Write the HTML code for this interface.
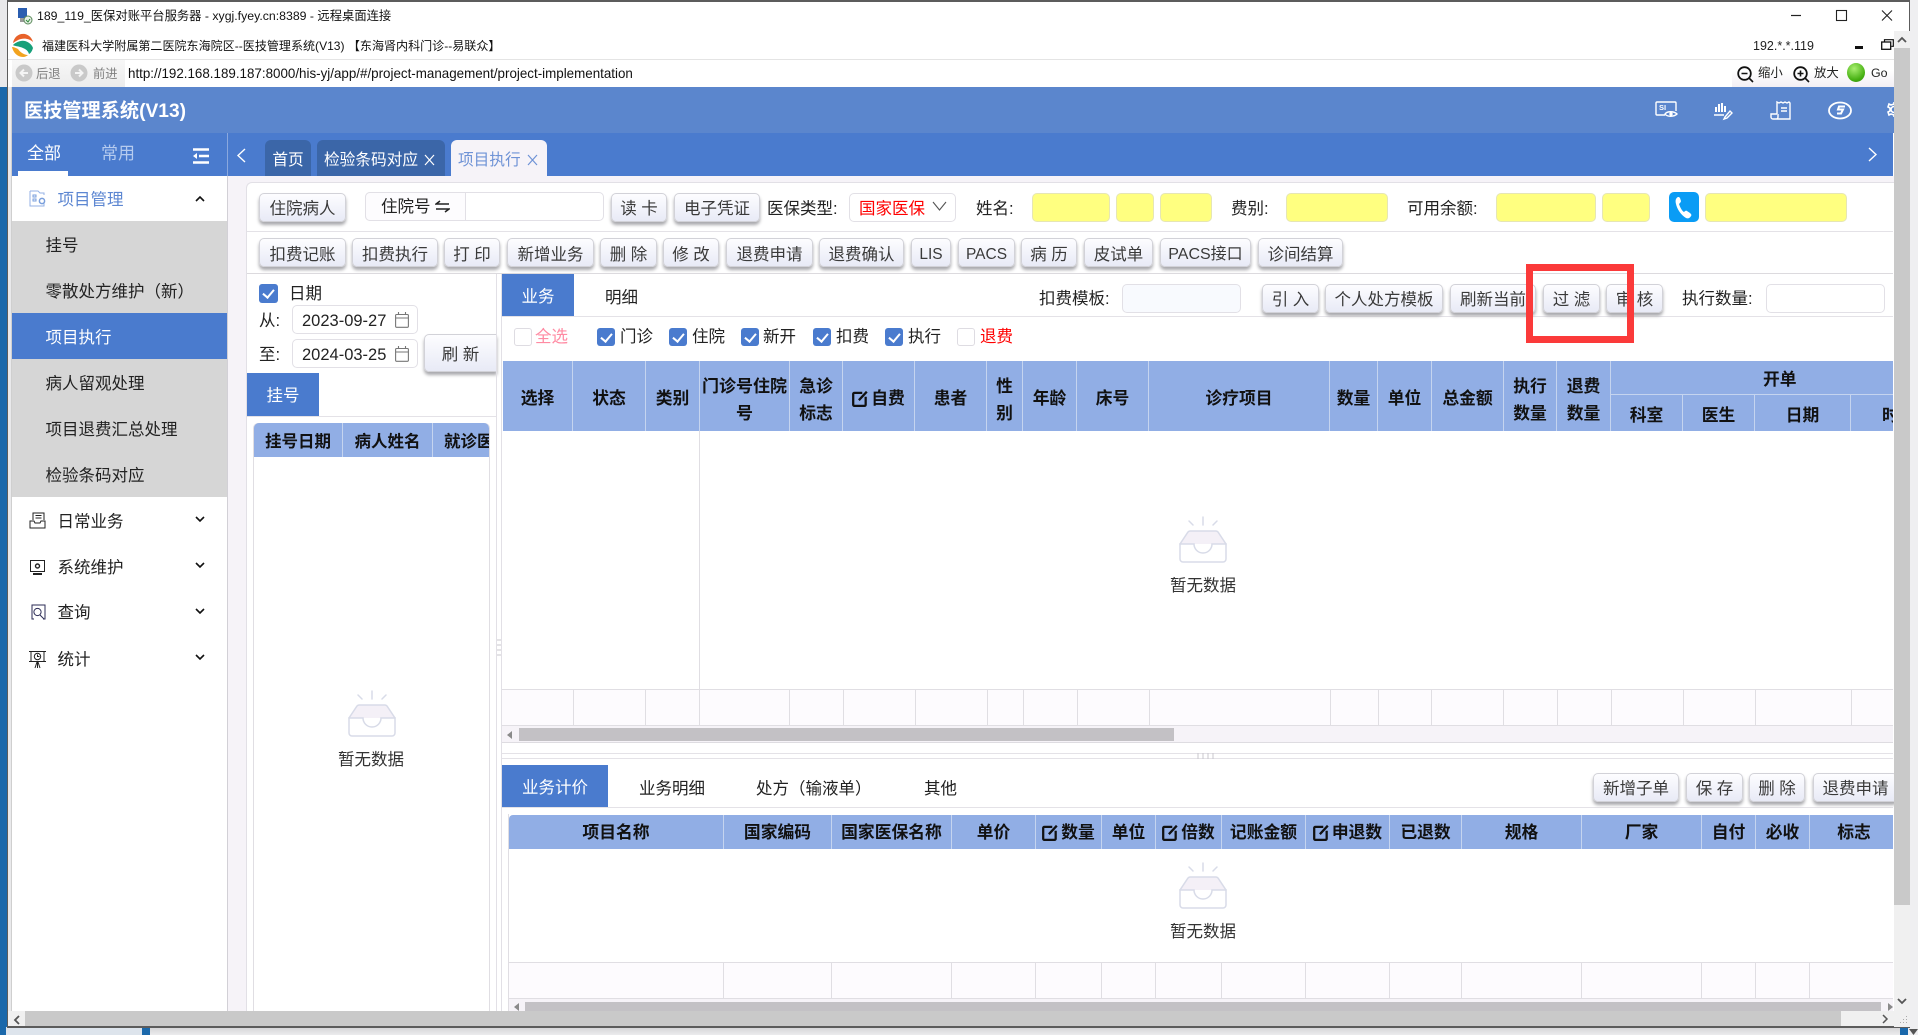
<!DOCTYPE html>
<html lang="zh">
<head>
<meta charset="utf-8">
<title>医技管理系统</title>
<style>
html,body{margin:0;padding:0;width:1918px;height:1035px;overflow:hidden;background:#efeff1;}
body{position:relative;font-family:"Liberation Sans","Noto Sans CJK SC",sans-serif;font-size:16.5px;color:#222;}
div,span,svg{box-sizing:border-box;}
.a{position:absolute;white-space:pre;}
.t{position:absolute;white-space:pre;line-height:24px;height:24px;margin-top:1px;}
.btn{position:absolute;height:29px;border:1px solid #d2d2d8;border-radius:5px;background:linear-gradient(#fdfdff,#e8eaf6);box-shadow:0 3px 3px #a9a9ad;text-align:center;line-height:30px;color:#3a3a3a;white-space:pre;overflow:hidden;}
.r2{top:238px;line-height:32px;}
.y{position:absolute;top:193px;height:29px;background:#ffff80;border:1px solid #e6e6b4;border-radius:5px;}
.in{position:absolute;background:#fff;border:1px solid #e2e0e6;border-radius:5px;}
.cb{position:absolute;top:328px;width:18px;height:18px;border-radius:3px;background:#4a7bce;}
.cb:after{content:"";position:absolute;left:6px;top:3px;width:5px;height:9px;border:solid #fff;border-width:0 2px 2px 0;transform:rotate(40deg);}
.cb.n{background:#fff;border:1px solid #dedce2;}
.cb.n:after{display:none;}
.th{position:absolute;background:#91aee5;}
.c{position:absolute;top:0;bottom:0;border-right:1px solid #c5d4ef;display:flex;align-items:center;justify-content:center;text-align:center;font-weight:bold;color:#111;line-height:27px;overflow:hidden;padding-top:5px;font-size:16.8px;white-space:nowrap;}
.w{white-space:normal;padding:9px 9px 0;}
.p4 .c{padding-top:4px;font-size:16.5px;}
.p2 .c{padding-top:1px;}
.f{position:absolute;background:#fdfbfe;border-top:1px solid #e0dee3;border-bottom:1px solid #e0dee3;}
.f i{position:absolute;top:0;bottom:0;width:1px;background:#e0dee3;}
.mi{position:absolute;left:57.5px;height:24px;line-height:24px;white-space:pre;margin-top:1px;}
.si{position:absolute;left:45.5px;height:24px;line-height:24px;white-space:pre;color:#222;margin-top:1px;}
.tab{position:absolute;top:140px;height:36px;border-radius:6px 6px 0 0;line-height:41px;text-align:center;color:#fff;background:#3b66a8;white-space:pre;font-size:15.7px;overflow:hidden;}
.chev{position:absolute;left:195px;width:10px;height:10px;}
svg.ic{position:absolute;overflow:visible;}
.pane{position:absolute;background:#fff;}
.ln{position:absolute;background:#e4e2e7;}
</style>
</head>
<body>
<!-- desktop behind -->
<div class="a" style="left:0;top:87px;width:7px;height:948px;background:#1a68ab"></div>
<div class="a" style="left:0;top:0;width:7px;height:87px;background:#e9e9eb"></div>
<div class="a" style="left:6px;top:1027px;width:136px;height:8px;background:#dde4ec"></div>
<div class="a" style="left:142px;top:1027px;width:8px;height:8px;background:#1a68ab"></div>
<div class="a" style="left:150px;top:1027px;width:1750px;height:8px;background:linear-gradient(#d4d4d6,#ececee)"></div>
<div class="a" style="left:1900px;top:1027px;width:8px;height:8px;background:#1a68ab"></div>

<!-- window -->
<div class="a" style="left:7px;top:0;width:1903px;height:1028px;background:#fff;border:1px solid #5c5c5c;border-top-width:2px;border-bottom-width:2px"></div>
<div class="a" style="left:8px;top:87px;width:4px;height:925px;background:#e9e9eb;border-right:1px solid #cfcfcf"></div>

<!-- title bar -->
<svg class="ic" style="left:17px;top:8px" width="17" height="17" viewBox="0 0 17 17"><rect x="1" y="0" width="9" height="10" fill="#2a5db0"/><rect x="3" y="10" width="8" height="4" fill="#9a9a9a"/><circle cx="11" cy="12" r="4" fill="#e6efe6" stroke="#5a8a5a"/><path d="M9 12l2 2 2-3" stroke="#2f8a3a" fill="none"/></svg>
<div class="t" style="left:37px;top:3px;font-size:12.3px;color:#111">189_119_医保对账平台服务器 - xygj.fyey.cn:8389 - 远程桌面连接</div>
<svg class="ic" style="left:1791px;top:10px" width="101" height="11" viewBox="0 0 101 11"><path d="M0 5.500H10" stroke="#222" stroke-width="1.200"/><rect x="45.500" y=".5" width="10" height="10" fill="none" stroke="#222" stroke-width="1.100"/><path d="M91 .5l10 10M101 .5l-10 10" stroke="#222" stroke-width="1.100"/></svg>

<!-- app row -->
<svg class="ic" style="left:10px;top:33px" width="24" height="25" viewBox="0 0 24 25">
<path d="M3 10C4 4 9 0 15 1c4 1 7 4 8 8-3-3-8-4-12-3-4 1-6 3-8 4Z" fill="#e8622a"/>
<path d="M3 12c3-3 8-5 12-4 4 1 7 4 8 7-1 3-2 5-4 6-1-4-5-6-9-7-3-1-6-1-7-2Z" fill="#17a07a"/>
<path d="M2 14c1 5 5 10 11 10 2 0 4-1 5-2-4 0-8-3-10-6-2-1-4-2-6-2Z" fill="#f2a31e"/>
</svg>
<div class="t" style="left:42px;top:33px;font-size:12.05px;color:#111">福建医科大学附属第二医院东海院区--医技管理系统(V13) 【东海肾内科门诊--易联众】</div>
<div class="t" style="left:1753px;top:33px;font-size:12.5px;color:#222">192.*.*.119</div>
<div class="a" style="left:1855px;top:46px;width:8px;height:3px;background:#111"></div>
<svg class="ic" style="left:1881px;top:39px" width="13" height="11" viewBox="0 0 13 11"><path d="M3.500 2.500V.7h8.800v6.600h-2" fill="none" stroke="#111" stroke-width="1.200"/><rect x=".7" y="3" width="9" height="7.300" fill="#fff" stroke="#111" stroke-width="1.300"/></svg>
<div class="a" style="left:8px;top:59px;width:1886px;height:1px;background:#e4e4e4"></div>

<!-- nav row -->
<div class="a" style="left:12px;top:60px;width:113px;height:27px;background:linear-gradient(#f7f7f7,#ececec)"></div>
<svg class="ic" style="left:15px;top:64px" width="18" height="18" viewBox="0 0 18 18"><circle cx="9" cy="9" r="8.500" fill="#c9c9c9"/><path d="M13 9H6M9 5.500L5.500 9 9 12.500" stroke="#f4f4f4" stroke-width="2" fill="none"/></svg>
<div class="t" style="left:36px;top:61px;font-size:12.3px;color:#7f7f7f">后退</div>
<svg class="ic" style="left:70px;top:64px" width="18" height="18" viewBox="0 0 18 18"><circle cx="9" cy="9" r="8.500" fill="#c9c9c9"/><path d="M5 9h7M9 5.500L12.500 9 9 12.500" stroke="#f4f4f4" stroke-width="2" fill="none"/></svg>
<div class="t" style="left:93px;top:61px;font-size:12.3px;color:#7f7f7f">前进</div>
<div class="t" style="left:128px;top:61px;font-size:13.38px;color:#111">http://192.168.189.187:8000/his-yj/app/#/project-management/project-implementation</div>
<div class="a" style="left:1732px;top:60px;width:162px;height:27px;background:linear-gradient(#fff 40%,#f2eff4)"></div>
<svg class="ic" style="left:1737px;top:66px" width="17" height="17" viewBox="0 0 17 17"><circle cx="7.500" cy="7.500" r="6.300" fill="none" stroke="#111" stroke-width="1.800"/><path d="M4.500 7.500h6M12 12l4 4" stroke="#111" stroke-width="1.600"/></svg>
<div class="t" style="left:1758px;top:60px;font-size:12.4px;color:#222">缩小</div>
<svg class="ic" style="left:1793px;top:66px" width="17" height="17" viewBox="0 0 17 17"><circle cx="7.500" cy="7.500" r="6.300" fill="none" stroke="#111" stroke-width="1.800"/><path d="M4.500 7.500h6M7.500 4.500v6M12 12l4 4" stroke="#111" stroke-width="1.600"/></svg>
<div class="t" style="left:1814px;top:60px;font-size:12.4px;color:#222">放大</div>
<div class="a" style="left:1847px;top:63px;width:18px;height:19px;border-radius:50%;background:radial-gradient(circle at 40% 30%,#a8ef70,#46b012 65%,#2c8208)"></div>
<div class="t" style="left:1871px;top:60px;font-size:12.4px;color:#222">Go</div>

<!-- blue header -->
<div class="a" style="left:12px;top:87px;width:1882px;height:46px;background:#5b86cd"></div>
<div class="t" style="left:24px;top:99px;font-size:19.2px;font-weight:bold;color:#fff">医技管理系统(V13)</div>
<svg class="ic" style="left:1655px;top:101px" width="240" height="18" viewBox="0 0 240 18" fill="none" stroke="#fff" stroke-width="1.400">
<path d="M10 14H2a1 1 0 0 1-1-1V2a1 1 0 0 1 1-1h18a1 1 0 0 1 1 1v8"/><circle cx="16" cy="13" r="1.700" fill="#fff" stroke="none"/><path d="M10 13c2-3 9-3 12 0-3 3-10 3-12 0Z"/>
<text x="4" y="9" font-size="7.500" font-weight="bold" fill="#fff" stroke="none" font-family="Liberation Sans">SI</text>
<path d="M61 11V6M64 11V3M67 11V2M70 11V5" stroke-width="2"/><path d="M59 14h10M70 16l5-6 2 2-5 5-3 1Z" stroke-width="1.400"/>
<path d="M122 13V1l2 1 2-1 2 1 2-1 2 1 2-1 1 1v16h-14M122 13h-6v3a2 2 0 0 0 2 2h3a2 2 0 0 0 2-2v-3M126 7h6M126 10h6"/>
<ellipse cx="185" cy="9.500" rx="11" ry="8" stroke-width="1.800"/><path d="M190 5.500h-6l-1 3h5l-2 4h-4" stroke-width="2"/>
<path d="M239 1v2l-3 1-2-1-1 3 2 1v3l-2 1 1 3 2-1 3 1v2" stroke-width="1.600"/><circle cx="239" cy="8.500" r="3" stroke-width="1.600"/>
</svg>

<!-- tab strip -->
<div class="a" style="left:12px;top:133px;width:1881px;height:43px;background:#4a7bce"></div>
<div class="a" style="left:227px;top:133px;width:1px;height:43px;background:#8aa8de"></div>
<div class="t" style="left:27px;top:141px;font-size:17px;color:#fff">全部</div>
<div class="t" style="left:101px;top:141px;font-size:17px;color:#b5cbef">常用</div>
<div class="a" style="left:18px;top:171px;width:50px;height:5px;background:#fff"></div>
<svg class="ic" style="left:193px;top:148px" width="16" height="16" viewBox="0 0 16 16"><path d="M0 1.500h16M6 8h10M0 14.500h16" stroke="#fff" stroke-width="2.400"/><path d="M0 8l4-3v6Z" fill="#fff"/></svg>
<svg class="ic" style="left:236px;top:148px" width="10" height="15" viewBox="0 0 10 15"><path d="M9 1L2 7.500 9 14" fill="none" stroke="#fff" stroke-width="1.400"/></svg>
<div class="tab" style="left:265px;width:46px">首页</div>
<div class="tab" style="left:317px;width:128px;text-align:left;padding-left:7px">检验条码对应<svg class="ic" style="left:107px;top:14px" width="11" height="12" viewBox="0 0 11 12"><path d="M1 1l9 10M10 1L1 11" stroke="#fff" stroke-width="1.200"/></svg></div>
<div class="tab" style="left:451px;width:96px;background:#f6f3f8;color:#6f93d6;text-align:left;padding-left:7px">项目执行<svg class="ic" style="left:76px;top:14px" width="11" height="12" viewBox="0 0 11 12"><path d="M1 1l9 10M10 1L1 11" stroke="#6f93d6" stroke-width="1.200"/></svg></div>
<svg class="ic" style="left:1868px;top:147px" width="10" height="15" viewBox="0 0 10 15"><path d="M1 1l7 6.500L1 14" fill="none" stroke="#fff" stroke-width="1.400"/></svg>

<!-- sidebar -->
<div class="a" style="left:12px;top:176px;width:215px;height:835px;background:#fff"></div>
<div class="a" style="left:227px;top:176px;width:1px;height:835px;background:#d2d0d6"></div>
<svg class="ic" style="left:29px;top:190px" width="17" height="17" viewBox="0 0 17 17" fill="none" stroke="#94b2e6" stroke-width="1"><path d="M1 1h8l2 2h4v2M15 13v3H1V1"/><path d="M4 5h3v2H4zM4 9h3v2H4z" stroke="#7a9fdc"/><circle cx="13" cy="11" r="2.600" stroke="#7a9fdc" stroke-width="1.500"/></svg>
<div class="mi" style="top:187px;color:#5d87d2">项目管理</div>
<svg class="chev" style="top:194px" viewBox="0 0 10 10"><path d="M1 7l4-4 4 4" fill="none" stroke="#111" stroke-width="1.600"/></svg>
<div class="a" style="left:12px;top:221px;width:215px;height:276px;background:#d6d6d6"></div>
<div class="a" style="left:12px;top:313px;width:215px;height:46px;background:#4a7bce"></div>
<div class="si" style="top:233px">挂号</div>
<div class="si" style="top:279px">零散处方维护（新）</div>
<div class="si" style="top:325px;color:#fff">项目执行</div>
<div class="si" style="top:371px">病人留观处理</div>
<div class="si" style="top:417px">项目退费汇总处理</div>
<div class="si" style="top:463px">检验条码对应</div>
<svg class="ic" style="left:29px;top:512px" width="17" height="17" viewBox="0 0 17 17" fill="none" stroke="#222" stroke-width="1"><path d="M4 8V1h11v7M6.500 3.500h6M6.500 6h6"/><path d="M1 9h4l1 2h5l1-2h4v7H1Z"/></svg>
<div class="mi" style="top:509px">日常业务</div>
<svg class="chev" style="top:514px" viewBox="0 0 10 10"><path d="M1 3l4 4 4-4" fill="none" stroke="#111" stroke-width="1.600"/></svg>
<svg class="ic" style="left:29px;top:559px" width="17" height="17" viewBox="0 0 17 17" fill="none" stroke="#222" stroke-width="1"><rect x="1.500" y="1.500" width="14" height="11"/><circle cx="8.500" cy="7" r="2" stroke-width="1.400"/><path d="M4 15h9" stroke-width="2"/></svg>
<div class="mi" style="top:555px">系统维护</div>
<svg class="chev" style="top:560px" viewBox="0 0 10 10"><path d="M1 3l4 4 4-4" fill="none" stroke="#111" stroke-width="1.600"/></svg>
<svg class="ic" style="left:30px;top:604px" width="16" height="16" viewBox="0 0 16 16" fill="none" stroke="#2b2b55" stroke-width="1"><path d="M4 15H2V1h13v14h-2"/><circle cx="7.500" cy="8" r="3.600"/><path d="M10 11l4 4"/></svg>
<div class="mi" style="top:600px">查询</div>
<svg class="chev" style="top:606px" viewBox="0 0 10 10"><path d="M1 3l4 4 4-4" fill="none" stroke="#111" stroke-width="1.600"/></svg>
<svg class="ic" style="left:29px;top:650px" width="17" height="18" viewBox="0 0 17 18" fill="none" stroke="#222" stroke-width="1"><path d="M0 1.500h17M0 11.500h17M2 1.500v10M15 1.500v10"/><circle cx="8.500" cy="6.500" r="3.200"/><path d="M8.500 4.500v2h2M6 18l2-6M11 18l-2-6M8.500 12v6"/></svg>
<div class="mi" style="top:647px">统计</div>
<svg class="chev" style="top:652px" viewBox="0 0 10 10"><path d="M1 3l4 4 4-4" fill="none" stroke="#111" stroke-width="1.600"/></svg>

<!-- content background -->
<div class="a" style="left:228px;top:176px;width:1666px;height:836px;background:#f6f3f8"></div>
<div class="a" style="left:246px;top:182px;width:1648px;height:830px;background:#fff;border-left:1px solid #e2e0e6;border-top:1px solid #e2e0e6;border-radius:6px 0 0 0"></div>

<!-- row 1 -->
<div class="btn" style="left:259px;top:193px;width:87px">住院病人</div>
<div class="in" style="left:365px;top:192px;width:239px;height:29px"></div>
<div class="a" style="left:365px;top:192px;width:101px;height:29px;background:#fdfcfe;border:1px solid #e2e0e6;border-radius:5px 0 0 5px;text-align:center;line-height:28px;color:#222">住院号 <svg width="15" height="13" viewBox="0 0 15 13" style="vertical-align:-1px"><path d="M14 4H1l4-3M1 9h13l-4 3" fill="none" stroke="#222" stroke-width="1.500"/></svg></div>
<div class="btn" style="left:611px;top:193px;width:56px">读 卡</div>
<div class="btn" style="left:674px;top:193px;width:86px">电子凭证</div>
<div class="t" style="left:767px;top:196px">医保类型:</div>
<div class="in" style="left:849px;top:193px;width:107px;height:29px"></div>
<div class="t" style="left:859px;top:196px;color:#f00">国家医保</div>
<svg class="ic" style="left:932px;top:201px" width="15" height="11" viewBox="0 0 15 11"><path d="M1 1l6.500 8L14 1" fill="none" stroke="#555" stroke-width="1.100"/></svg>
<div class="t" style="left:976px;top:196px">姓名:</div>
<div class="y" style="left:1032px;width:78px"></div>
<div class="y" style="left:1116px;width:38px"></div>
<div class="y" style="left:1160px;width:52px"></div>
<div class="t" style="left:1231px;top:196px">费别:</div>
<div class="y" style="left:1286px;width:102px"></div>
<div class="t" style="left:1407px;top:196px">可用余额:</div>
<div class="y" style="left:1496px;width:100px"></div>
<div class="y" style="left:1602px;width:48px"></div>
<div class="a" style="left:1669px;top:192px;width:30px;height:30px;background:#0a9cf5;border-radius:5px"></div>
<svg class="ic" style="left:1669px;top:192px" width="30" height="30" viewBox="0 0 30 30"><path d="M9 5c-2 1-3 3-2 7 1 5 5 11 10 14 2 1 4 0 5-2 1-1 0-2-1-3l-3-2c-1-1-2 0-3 1-2-1-4-5-5-8 1-1 2-2 2-3l-1-3c-1-1-1-1-2-1Z" fill="#fff"/></svg>
<div class="y" style="left:1705px;width:142px"></div>
<div class="ln" style="left:247px;top:231px;width:1646px;height:1px"></div>

<!-- row 2 -->
<div class="btn r2" style="left:259px;width:87px">扣费记账</div>
<div class="btn r2" style="left:352px;width:86px">扣费执行</div>
<div class="btn r2" style="left:444px;width:56px">打 印</div>
<div class="btn r2" style="left:507px;width:87px">新增业务</div>
<div class="btn r2" style="left:600px;width:57px">删 除</div>
<div class="btn r2" style="left:663px;width:56px">修 改</div>
<div class="btn r2" style="left:726px;width:87px">退费申请</div>
<div class="btn r2" style="left:819px;width:85px">退费确认</div>
<div class="btn r2" style="left:911px;width:40px;font-size:15.5px">LIS</div>
<div class="btn r2" style="left:958px;width:57px;font-size:15.5px">PACS</div>
<div class="btn r2" style="left:1021px;width:56px">病 历</div>
<div class="btn r2" style="left:1084px;width:69px">皮试单</div>
<div class="btn r2" style="left:1160px;width:91px;font-size:16px">PACS接口</div>
<div class="btn r2" style="left:1258px;width:85px">诊间结算</div>
<div class="ln" style="left:247px;top:273px;width:1646px;height:1px;background:#dcdade"></div>

<!-- left pane -->
<div class="cb" style="left:259px;top:284px;width:19px;height:19px"></div>
<div class="t" style="left:289px;top:281px">日期</div>
<div class="t" style="left:259px;top:308px">从:</div>
<div class="in" style="left:292px;top:305px;width:126px;height:29px"></div>
<div class="t" style="left:302px;top:308px">2023-09-27</div>
<svg class="ic" style="left:395px;top:312px" width="14" height="16" viewBox="0 0 14 16" fill="none" stroke="#777" stroke-width="1.100"><rect x=".6" y="2.500" width="12.800" height="12.800" rx="1"/><path d="M.6 6h12.800M3.500 0v3M10.500 0v3"/></svg>
<div class="t" style="left:259px;top:342px">至:</div>
<div class="in" style="left:292px;top:339px;width:126px;height:29px"></div>
<div class="t" style="left:302px;top:342px">2024-03-25</div>
<svg class="ic" style="left:395px;top:346px" width="14" height="16" viewBox="0 0 14 16" fill="none" stroke="#777" stroke-width="1.100"><rect x=".6" y="2.500" width="12.800" height="12.800" rx="1"/><path d="M.6 6h12.800M3.500 0v3M10.500 0v3"/></svg>
<div class="btn" style="left:424px;top:334px;width:73px;height:38px;line-height:40px;border-radius:5px 0 0 5px">刷 新</div>
<div class="a" style="left:247px;top:373px;width:72px;height:43px;background:#4a7bce;color:#fff;text-align:center;line-height:46px">挂号</div>
<div class="ln" style="left:247px;top:416px;width:250px;height:1px"></div>
<div class="a" style="left:253px;top:423px;width:237px;height:590px;border:1px solid #e0dee3;border-radius:5px 5px 0 0"></div>
<div class="th p4" style="left:254px;top:423px;width:235px;height:34px;border-radius:5px 5px 0 0;overflow:hidden">
<div class="c" style="left:0;width:89px">挂号日期</div>
<div class="c" style="left:89px;width:90px">病人姓名</div>
<div class="c" style="left:179px;width:56px;justify-content:flex-start;padding-left:11px;border:none">就诊医生</div>
</div>
<svg class="ic" style="left:348px;top:690px" width="48" height="48" viewBox="0 0 48 48"><g fill="none" stroke="#d8dbe8" stroke-width="1.500" stroke-linecap="round"><path d="M24 1v8M10 5l4 4M38 5l-4 4"/><path d="M1 28L9 16a3 3 0 0 1 2-1h26a3 3 0 0 1 2 1l8 12" fill="#f4f0f7"/><path d="M1 28h14a9 9 0 0 0 18 0h14v15a3 3 0 0 1-3 3H4a3 3 0 0 1-3-3Z" fill="#fff"/></g></svg>
<div class="t" style="left:338px;top:747px;color:#333">暂无数据</div>

<!-- splitter -->
<div class="a" style="left:496px;top:274px;width:1px;height:738px;background:#e2e0e6"></div>
<div class="a" style="left:501px;top:274px;width:1px;height:738px;background:#e2e0e6"></div>
<svg class="ic" style="left:497px;top:639px" width="4" height="17" viewBox="0 0 4 17"><path d="M0 1h4M0 6h4M0 11h4M0 16h4" stroke="#c9c7cc"/></svg>

<!-- right pane top -->
<div class="a" style="left:502px;top:274px;width:72px;height:43px;background:#4a7bce;color:#fff;text-align:center;line-height:46px">业务</div>
<div class="t" style="left:605px;top:285px">明细</div>
<div class="ln" style="left:502px;top:316px;width:1391px;height:1px"></div>
<div class="t" style="left:1039px;top:286px">扣费模板:</div>
<div class="in" style="left:1122px;top:284px;width:119px;height:29px;background:#f8fafe"></div>
<div class="btn" style="left:1262px;top:284px;width:57px">引 入</div>
<div class="btn" style="left:1325px;top:284px;width:118px">个人处方模板</div>
<div class="btn" style="left:1450px;top:284px;width:86px">刷新当前</div>
<div class="btn" style="left:1543px;top:284px;width:57px">过 滤</div>
<div class="btn" style="left:1606px;top:284px;width:57px">审 核</div>
<div class="t" style="left:1682px;top:286px">执行数量:</div>
<div class="in" style="left:1766px;top:284px;width:119px;height:29px"></div>

<div class="cb n" style="left:514px"></div><div class="t" style="left:535px;top:324px;color:#ff8ba3">全选</div>
<div class="cb" style="left:597px"></div><div class="t" style="left:620px;top:324px">门诊</div>
<div class="cb" style="left:669px"></div><div class="t" style="left:692px;top:324px">住院</div>
<div class="cb" style="left:741px"></div><div class="t" style="left:763px;top:324px">新开</div>
<div class="cb" style="left:813px"></div><div class="t" style="left:836px;top:324px">扣费</div>
<div class="cb" style="left:885px"></div><div class="t" style="left:908px;top:324px">执行</div>
<div class="cb n" style="left:957px"></div><div class="t" style="left:980px;top:324px;color:#f00">退费</div>

<!-- table 1 -->
<div class="th" style="left:503px;top:361px;width:1390px;height:70px;overflow:hidden">
<div class="c" style="left:0;width:70px">选择</div>
<div class="c" style="left:70px;width:73px;padding-top:4px">状态</div>
<div class="c" style="left:143px;width:54px;padding-top:4px">类别</div>
<div class="c w" style="left:197px;width:90px;padding:8px 1px 0;font-size:17px">门诊号住院号</div>
<div class="c w" style="left:287px;width:53px;padding-top:8px">急诊标志</div>
<div class="c" style="left:340px;width:72px"><svg width="16" height="17" viewBox="0 0 14 15" style="margin-right:3px;flex:none"><path d="M9 2.500H2a1 1 0 0 0-1 1V13a1 1 0 0 0 1 1h9a1 1 0 0 0 1-1V6M6 9l7-7.500" fill="none" stroke="#111" stroke-width="2"/></svg>自费</div>
<div class="c" style="left:412px;width:72px">患者</div>
<div class="c w" style="left:484px;width:36px;padding-top:8px">性别</div>
<div class="c" style="left:520px;width:54px">年龄</div>
<div class="c" style="left:574px;width:72px">床号</div>
<div class="c" style="left:646px;width:181px">诊疗项目</div>
<div class="c" style="left:827px;width:48px">数量</div>
<div class="c" style="left:875px;width:54px">单位</div>
<div class="c" style="left:929px;width:72px">总金额</div>
<div class="c w" style="left:1001px;width:53px;padding-top:8px">执行数量</div>
<div class="c w" style="left:1054px;width:54px;padding-top:8px">退费数量</div>
<div class="c" style="left:1108px;width:282px;bottom:36px;border-right:none;border-bottom:1px solid #c5d4ef;justify-content:flex-start;padding-left:152px;padding-top:3px">开单</div>
<div class="c" style="left:1108px;width:72px;top:34px">科室</div>
<div class="c" style="left:1180px;width:72px;top:34px">医生</div>
<div class="c" style="left:1252px;width:96px;top:34px">日期</div>
<div class="c" style="left:1348px;width:42px;top:34px;border:none;justify-content:flex-start;padding-left:31px">时间</div>
</div>
<div class="a" style="left:699px;top:431px;width:1px;height:258px;background:#e0dee3"></div>
<svg class="ic" style="left:1179px;top:516px" width="48" height="48" viewBox="0 0 48 48"><g fill="none" stroke="#d8dbe8" stroke-width="1.500" stroke-linecap="round"><path d="M24 1v8M10 5l4 4M38 5l-4 4"/><path d="M1 28L9 16a3 3 0 0 1 2-1h26a3 3 0 0 1 2 1l8 12" fill="#f4f0f7"/><path d="M1 28h14a9 9 0 0 0 18 0h14v15a3 3 0 0 1-3 3H4a3 3 0 0 1-3-3Z" fill="#fff"/></g></svg>
<div class="t" style="left:1170px;top:573px;color:#333">暂无数据</div>
<div class="f" style="left:502px;top:689px;width:1391px;height:37px">
<i style="left:71px"></i><i style="left:143px"></i><i style="left:197px"></i><i style="left:287px"></i><i style="left:341px"></i><i style="left:413px"></i><i style="left:485px"></i><i style="left:521px"></i><i style="left:575px"></i><i style="left:647px"></i><i style="left:828px"></i><i style="left:876px"></i><i style="left:929px"></i><i style="left:1001px"></i><i style="left:1055px"></i><i style="left:1109px"></i><i style="left:1181px"></i><i style="left:1253px"></i><i style="left:1349px"></i>
</div>
<div class="a" style="left:502px;top:726px;width:1391px;height:17px;background:#f6f3f8;border-bottom:1px solid #dedce1"></div>
<svg class="ic" style="left:507px;top:731px" width="5" height="8" viewBox="0 0 5 8"><path d="M5 0v8L0 4Z" fill="#8a8a8a"/></svg>
<div class="a" style="left:519px;top:728px;width:655px;height:13px;background:#c3c1c5"></div>

<!-- horizontal splitter -->
<div class="ln" style="left:502px;top:753px;width:1391px;height:1px"></div>
<div class="ln" style="left:502px;top:758px;width:1391px;height:1px"></div>
<svg class="ic" style="left:1197px;top:753px" width="18" height="6" viewBox="0 0 18 6"><path d="M1 0v6M6 0v6M11 0v6M16 0v6" stroke="#c9c7cc"/></svg>

<!-- lower tabs -->
<div class="a" style="left:502px;top:765px;width:106px;height:43px;background:#4a7bce;color:#fff;text-align:center;line-height:46px">业务计价</div>
<div class="t" style="left:639px;top:776px">业务明细</div>
<div class="t" style="left:756px;top:776px">处方（输液单）</div>
<div class="t" style="left:924px;top:776px">其他</div>
<div class="ln" style="left:502px;top:807px;width:1391px;height:1px"></div>
<div class="btn" style="left:1593px;top:773px;width:86px">新增子单</div>
<div class="btn" style="left:1686px;top:773px;width:57px">保 存</div>
<div class="btn" style="left:1749px;top:773px;width:56px">删 除</div>
<div class="btn" style="left:1813px;top:773px;width:85px">退费申请</div>

<!-- table 2 -->
<div class="a" style="left:508px;top:814px;width:1386px;height:200px;border-left:1px solid #e0dee3"></div>
<div class="th p2" style="left:509px;top:815px;width:1384px;height:34px;border-radius:4px 0 0 0;overflow:hidden">
<div class="c" style="left:0;width:215px">项目名称</div>
<div class="c" style="left:215px;width:108px">国家编码</div>
<div class="c" style="left:323px;width:120px">国家医保名称</div>
<div class="c" style="left:443px;width:84px">单价</div>
<div class="c" style="left:527px;width:66px"><svg width="16" height="17" viewBox="0 0 14 15" style="margin-right:3px;flex:none"><path d="M9 2.500H2a1 1 0 0 0-1 1V13a1 1 0 0 0 1 1h9a1 1 0 0 0 1-1V6M6 9l7-7.500" fill="none" stroke="#111" stroke-width="2"/></svg>数量</div>
<div class="c" style="left:593px;width:54px">单位</div>
<div class="c" style="left:647px;width:66px"><svg width="16" height="17" viewBox="0 0 14 15" style="margin-right:3px;flex:none"><path d="M9 2.500H2a1 1 0 0 0-1 1V13a1 1 0 0 0 1 1h9a1 1 0 0 0 1-1V6M6 9l7-7.500" fill="none" stroke="#111" stroke-width="2"/></svg>倍数</div>
<div class="c" style="left:713px;width:84px">记账金额</div>
<div class="c" style="left:797px;width:84px"><svg width="16" height="17" viewBox="0 0 14 15" style="margin-right:3px;flex:none"><path d="M9 2.500H2a1 1 0 0 0-1 1V13a1 1 0 0 0 1 1h9a1 1 0 0 0 1-1V6M6 9l7-7.500" fill="none" stroke="#111" stroke-width="2"/></svg>申退数</div>
<div class="c" style="left:881px;width:72px">已退数</div>
<div class="c" style="left:953px;width:120px">规格</div>
<div class="c" style="left:1073px;width:120px">厂家</div>
<div class="c" style="left:1193px;width:54px">自付</div>
<div class="c" style="left:1247px;width:54px">必收</div>
<div class="c" style="left:1301px;width:83px;border:none;padding-left:5px">标志</div>
</div>
<svg class="ic" style="left:1179px;top:862px" width="48" height="48" viewBox="0 0 48 48"><g fill="none" stroke="#d8dbe8" stroke-width="1.500" stroke-linecap="round"><path d="M24 1v8M10 5l4 4M38 5l-4 4"/><path d="M1 28L9 16a3 3 0 0 1 2-1h26a3 3 0 0 1 2 1l8 12" fill="#f4f0f7"/><path d="M1 28h14a9 9 0 0 0 18 0h14v15a3 3 0 0 1-3 3H4a3 3 0 0 1-3-3Z" fill="#fff"/></g></svg>
<div class="t" style="left:1170px;top:919px;color:#333">暂无数据</div>
<div class="f" style="left:509px;top:962px;width:1384px;height:37px">
<i style="left:214px"></i><i style="left:322px"></i><i style="left:442px"></i><i style="left:526px"></i><i style="left:592px"></i><i style="left:646px"></i><i style="left:712px"></i><i style="left:796px"></i><i style="left:880px"></i><i style="left:952px"></i><i style="left:1072px"></i><i style="left:1192px"></i><i style="left:1246px"></i><i style="left:1300px"></i>
</div>
<div class="a" style="left:509px;top:999px;width:1384px;height:13px;background:#f6f3f8"></div>
<svg class="ic" style="left:514px;top:1003px" width="5" height="8" viewBox="0 0 5 8"><path d="M5 0v8L0 4Z" fill="#8a8a8a"/></svg>
<div class="a" style="left:525px;top:1002px;width:1356px;height:10px;background:#c3c1c5"></div>
<svg class="ic" style="left:1888px;top:1003px" width="5" height="8" viewBox="0 0 5 8"><path d="M0 0v8L5 4Z" fill="#8a8a8a"/></svg>

<!-- red highlight -->
<div class="a" style="left:1526px;top:264px;width:108px;height:79px;border:solid #fb3a3a;border-width:7px"></div>

<!-- window scrollbars -->
<div class="a" style="left:1894px;top:31px;width:16px;height:996px;background:#f0f0f0"></div>
<div class="a" style="left:1894px;top:48px;width:16px;height:857px;background:#c9c9c9"></div>
<svg class="ic" style="left:1897px;top:36px" width="10" height="8" viewBox="0 0 10 8"><path d="M1 6l4-4 4 4" fill="none" stroke="#555" stroke-width="1.800"/></svg>
<svg class="ic" style="left:1897px;top:997px" width="10" height="8" viewBox="0 0 10 8"><path d="M1 2l4 4 4-4" fill="none" stroke="#555" stroke-width="1.800"/></svg>
<div class="a" style="left:8px;top:1011px;width:1886px;height:15px;background:#f0f0f0"></div>
<div class="a" style="left:25px;top:1011px;width:1816px;height:15px;background:#c9c9c9"></div>
<svg class="ic" style="left:13px;top:1015px" width="8" height="10" viewBox="0 0 8 10"><path d="M6 1L2 5l4 4" fill="none" stroke="#555" stroke-width="1.800"/></svg>
<svg class="ic" style="left:1881px;top:1014px" width="8" height="10" viewBox="0 0 8 10"><path d="M2 1l4 4-4 4" fill="none" stroke="#555" stroke-width="1.500"/></svg>
<svg class="ic" style="left:1898px;top:1015px" width="10" height="10" viewBox="0 0 10 10"><path d="M8 1h1v1H8zM5 4h1v1H5zM8 4h1v1H8zM2 7h1v1H2zM5 7h1v1H5zM8 7h1v1H8z" fill="#aaa"/></svg>
<svg class="ic" style="left:1909px;top:1029px" width="9" height="6" viewBox="0 0 9 6"><path d="M0 0h9L4.500 6Z" fill="#555"/></svg>
</body>
</html>
